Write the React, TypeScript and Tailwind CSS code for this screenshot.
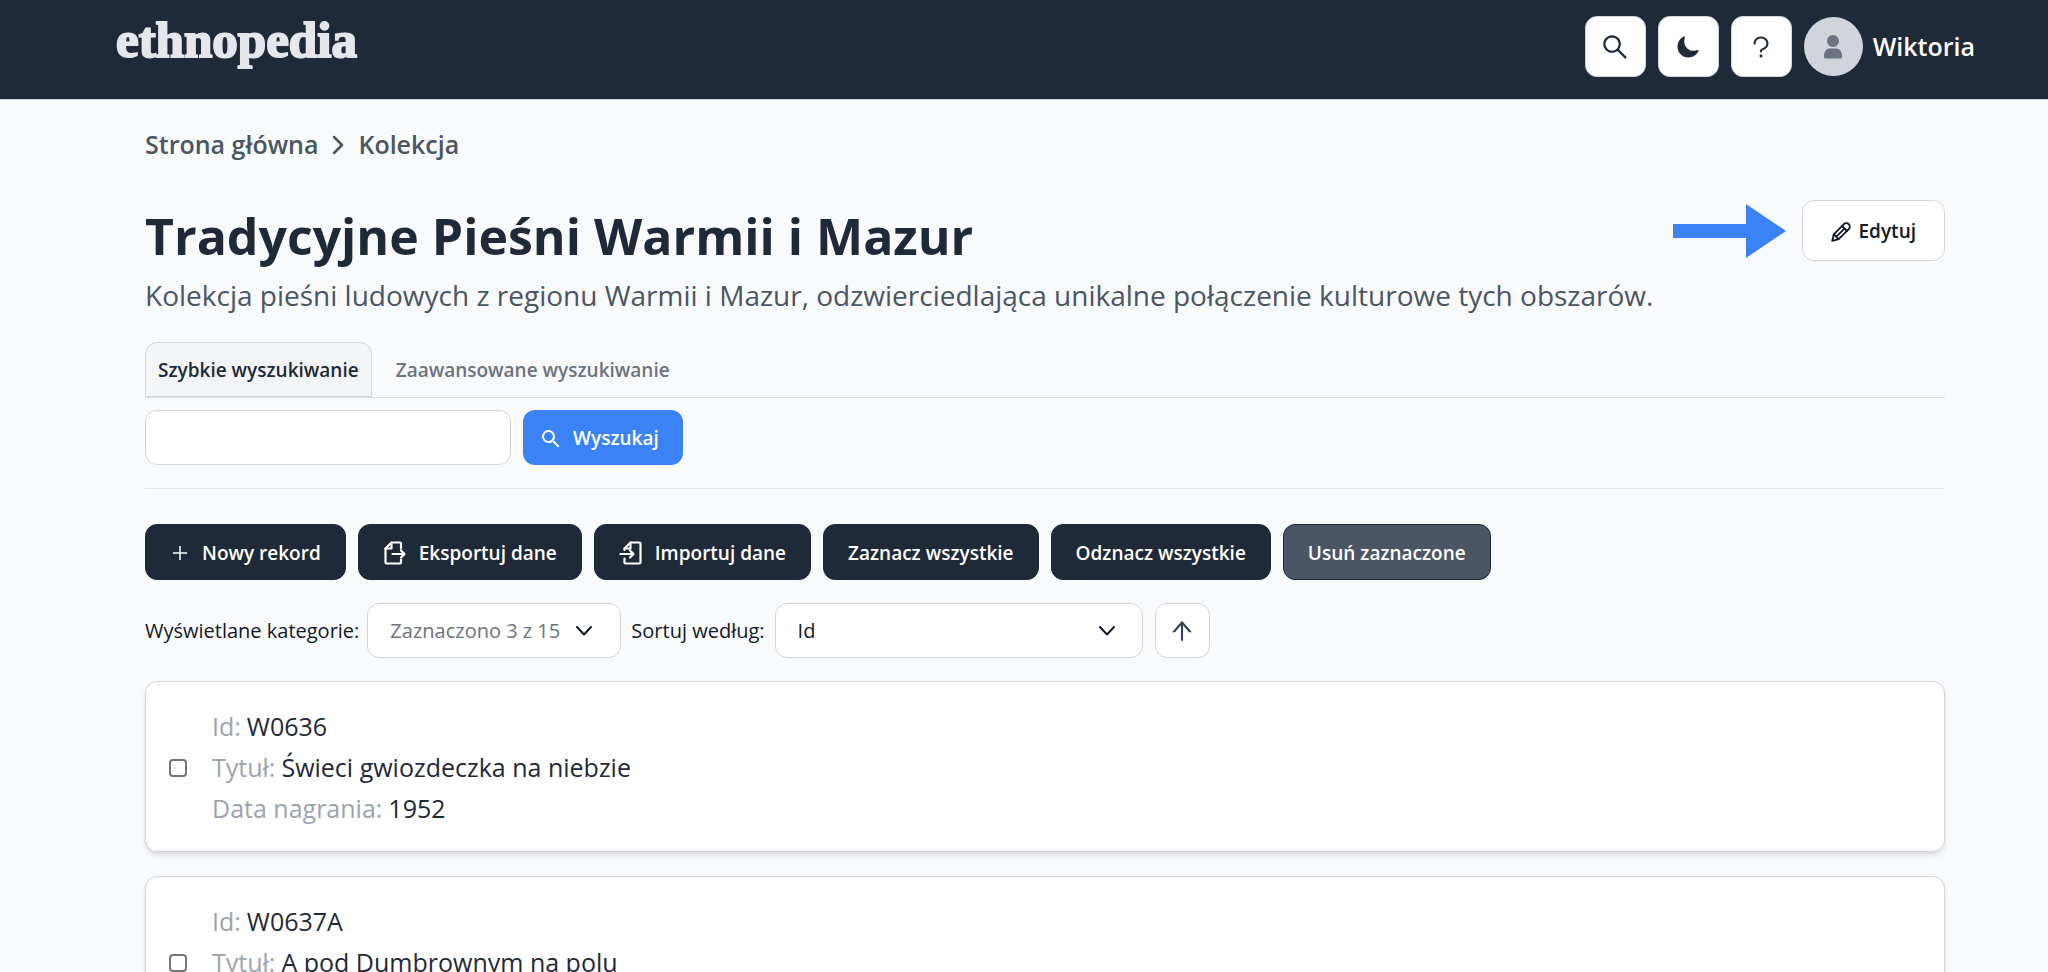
import React from "react";
import { AiOutlineSearch, AiOutlineQuestion, AiOutlinePlus, AiOutlineArrowUp } from "react-icons/ai";
import { IoMoon } from "react-icons/io5";
import { MdSearch } from "react-icons/md";

const records = [
  { id: "W0636", title: "Świeci gwiozdeczka na niebzie", date: "1952" },
  { id: "W0637A", title: "A pod Dumbrownym na polu", date: "1952" },
];

function PencilIcon() {
  return (
    <svg className="size-5" viewBox="0 0 20 20" fill="none" stroke="currentColor" strokeWidth="1.8" strokeLinejoin="round" strokeLinecap="round" aria-hidden="true">
      <path d="M1.200 18.800 2.800 12.400 12.800 2.200a3.450 3.450 0 0 1 5 5L7.600 17.200Z" />
      <path d="m11 4 5 5M2.800 12.400l4.800 4.800M5.400 14.600 13.400 6.600" />
    </svg>
  );
}

function ExportIcon() {
  return (
    <svg className="h-6 w-6" viewBox="0 0 24 24" fill="none" stroke="currentColor" strokeWidth="2.2" strokeLinejoin="round" strokeLinecap="round" aria-hidden="true">
      <path d="M18 7.500V2.500a1 1 0 0 0-1-1H8.500L2.500 7.500v14a1 1 0 0 0 1 1H17a1 1 0 0 0 1-1V18.500" />
      <path d="M8.500 1.500v6h-6M9.500 13H21.500M18 9.500l3.500 3.500-3.500 3.500" />
    </svg>
  );
}

function ImportIcon() {
  return (
    <svg className="h-6 w-6" viewBox="0 0 24 24" fill="none" stroke="currentColor" strokeWidth="2.2" strokeLinejoin="round" strokeLinecap="round" aria-hidden="true">
      <path d="M5.500 9V7.500l6-6H20.500a1 1 0 0 1 1 1v19a1 1 0 0 1-1 1H6.500a1 1 0 0 1-1-1V17.500" />
      <path d="M11.500 1.500v6h-6M1.500 13h13M11 9.500l3.500 3.500-3.500 3.500" />
    </svg>
  );
}

function ChevronDown() {
  return (
    <svg className="h-4 w-4 shrink-0" viewBox="0 0 16 16" fill="none" stroke="currentColor" strokeWidth="2" strokeLinecap="round" strokeLinejoin="round" aria-hidden="true">
      <path d="m1 4 7 7.500 7-7.500" />
    </svg>
  );
}

function NavButton({ label, children }: { label: string; children: React.ReactNode }) {
  return (
    <button type="button" aria-label={label} className="flex size-[61px] items-center justify-center rounded-xl border border-gray-300 bg-white text-gray-800">
      {children}
    </button>
  );
}

function ActionButton({ icon, muted, children }: { icon?: React.ReactNode; muted?: boolean; children: React.ReactNode }) {
  return (
    <button
      type="button"
      className={
        "flex h-14 items-center gap-3 rounded-xl border border-[#1f2937] px-6 pt-0.5 text-[19px] font-semibold whitespace-nowrap text-white " +
        (muted ? "bg-[#4b5563]" : "bg-[#1f2937]")
      }
    >
      {icon}
      {children}
    </button>
  );
}

function RecordCard({ id, title, date }: { id: string; title: string; date: string }) {
  return (
    <li className="flex items-center gap-[25px] rounded-xl border border-[#d1d5db] bg-white px-[23px] pt-6 pb-[22px] shadow-md">
      <input type="checkbox" aria-label={"Zaznacz rekord " + id} className="size-[18px] shrink-0 appearance-none rounded-[4px] border-2 border-[#767676] bg-white" />
      <dl className="text-[25px] leading-[41px] text-[#1f2937]">
        {[["Id", id], ["Tytuł", title], ["Data nagrania", date]].map(([k, v]) => (
          <div key={k} className="flex gap-1.5">
            <dt className="text-[#9ca3af]">{k}:</dt>
            <dd>{v}</dd>
          </div>
        ))}
      </dl>
    </li>
  );
}

export default function App() {
  return (
    <div className="h-screen overflow-hidden bg-[#f9fafb] font-['Open_Sans','Noto_Sans',sans-serif] text-[#111827]">
      <header className="flex h-[100px] items-start justify-between border-b border-[#d1d5db] bg-[#1f2937] pr-[73px] pl-[116px]">
        <a href="#" className="mt-2.5 font-['Liberation_Serif',serif] text-[51px] leading-[60px] font-bold text-[#e5e7eb] [-webkit-text-stroke:2px_#e5e7eb]">
          ethnopedia
        </a>
        <div className="mt-4 flex items-center gap-3">
          <NavButton label="Szukaj"><AiOutlineSearch className="size-[30px]" /></NavButton>
          <NavButton label="Tryb ciemny"><IoMoon className="size-6" /></NavButton>
          <NavButton label="Pomoc"><AiOutlineQuestion className="size-7" /></NavButton>
          <button type="button" className="flex items-center gap-2.5 text-[25px] font-semibold text-white">
            <span className="flex size-[59px] items-center justify-center rounded-full bg-[#d1d5db] text-[#6b7280]">
              <svg className="size-6" viewBox="0 0 24 24" fill="currentColor" aria-hidden="true">
                <circle cx="12" cy="6" r="6" />
                <path d="M3 21.500C3 17 5 13.500 9 13.500h6c4 0 6 3.500 6 8 0 1.500-.5 2-1.500 2h-15C3.500 23.500 3 23 3 21.500Z" />
              </svg>
            </span>
            Wiktoria
          </button>
        </div>
      </header>

      <main className="pr-[103px] pl-[145px]">
        <nav aria-label="Okruszki" className="flex h-[90px] items-center gap-3.5 text-[25px] font-semibold text-[#4b5563]">
          <a href="#">Strona główna</a>
          <svg className="h-5 w-3" viewBox="0 0 12 20" fill="none" stroke="currentColor" strokeWidth="2.5" strokeLinecap="round" strokeLinejoin="round" aria-hidden="true">
            <path d="m2 2 8 8-8 8" />
          </svg>
          <a href="#">Kolekcja</a>
        </nav>

        <div className="flex items-start justify-between pt-2.5">
          <div>
            <h1 className="pt-0.5 text-[50px] leading-[68px] font-bold text-[#1f2937]">Tradycyjne Pieśni Warmii i Mazur</h1>
            <p className="text-[28px] leading-[50px] text-[#4b5563]">
              Kolekcja pieśni ludowych z regionu Warmii i Mazur, odzwierciedlająca unikalne połączenie kulturowe tych obszarów.
            </p>
          </div>
          <div className="flex items-center gap-4">
            <svg className="h-[54px] w-[113px]" viewBox="0 0 113 54" fill="#3b82f6" aria-hidden="true">
              <path d="M0 20h73V0l40 27-40 27V34H0Z" />
            </svg>
            <button type="button" className="flex h-[61px] items-center gap-2 rounded-xl border border-[#d1d5db] bg-white px-7 pt-0.5 text-[19px] font-semibold">
              <PencilIcon />
              Edytuj
            </button>
          </div>
        </div>

        <div role="tablist" className="mt-[22px] flex h-14 border-b border-[#d9dce1] text-[19px] font-semibold">
          <button type="button" role="tab" aria-selected="true" className="rounded-t-xl border border-[#d1d5db] bg-[#f3f4f6] px-3 pt-0.5 text-[#1f2937]">
            Szybkie wyszukiwanie
          </button>
          <button type="button" role="tab" aria-selected="false" className="px-6 pt-0.5 text-[#6b7280]">
            Zaawansowane wyszukiwanie
          </button>
        </div>

        <form className="flex gap-3 border-b border-[#e5e7eb] pt-3 pb-[23px]" onSubmit={(e) => e.preventDefault()}>
          <input type="text" aria-label="Szukana fraza" className="h-[55px] w-[366px] rounded-xl border border-[#d1d5db] bg-white px-4 text-xl" />
          <button type="submit" className="flex h-[55px] items-center gap-2.5 rounded-xl bg-[#3b82f6] pt-0.5 pr-6 pl-4 text-[19px] font-semibold text-white">
            <MdSearch className="size-6" />
            Wyszukaj
          </button>
        </form>

        <div className="mt-[35px] flex gap-3">
          <ActionButton icon={<AiOutlinePlus className="size-5" />}>Nowy rekord</ActionButton>
          <ActionButton icon={<ExportIcon />}>Eksportuj dane</ActionButton>
          <ActionButton icon={<ImportIcon />}>Importuj dane</ActionButton>
          <ActionButton>Zaznacz wszystkie</ActionButton>
          <ActionButton>Odznacz wszystkie</ActionButton>
          <ActionButton muted>Usuń zaznaczone</ActionButton>
        </div>

        <div className="mt-[23px] flex items-center gap-2 text-xl">
          <span>Wyświetlane kategorie:</span>
          <button type="button" className="flex h-[55px] w-[254px] items-center gap-4 rounded-xl border border-[#d1d5db] bg-white px-[22px] text-[#6b7280]">
            Zaznaczono 3 z 15
            <span className="text-[#111827]"><ChevronDown /></span>
          </button>
          <label htmlFor="sort" className="mx-0.5">Sortuj według:</label>
          <div className="mr-1 grid items-center">
            <select id="sort" defaultValue="Id" className="col-start-1 row-start-1 h-[55px] w-[368px] appearance-none rounded-xl border border-[#d1d5db] bg-white px-[22px]">
              <option>Id</option>
              <option>Tytuł</option>
            </select>
            <span className="pointer-events-none col-start-1 row-start-1 mr-7 justify-self-end"><ChevronDown /></span>
          </div>
          <button type="button" aria-label="Sortuj rosnąco" className="flex size-[55px] items-center justify-center rounded-xl border border-[#d1d5db] bg-white text-[#374151]">
            <AiOutlineArrowUp className="size-7" />
          </button>
        </div>

        <ul className="mt-[23px] flex flex-col gap-6">
          {records.map((r) => (
            <RecordCard key={r.id} {...r} />
          ))}
        </ul>
      </main>
    </div>
  );
}
